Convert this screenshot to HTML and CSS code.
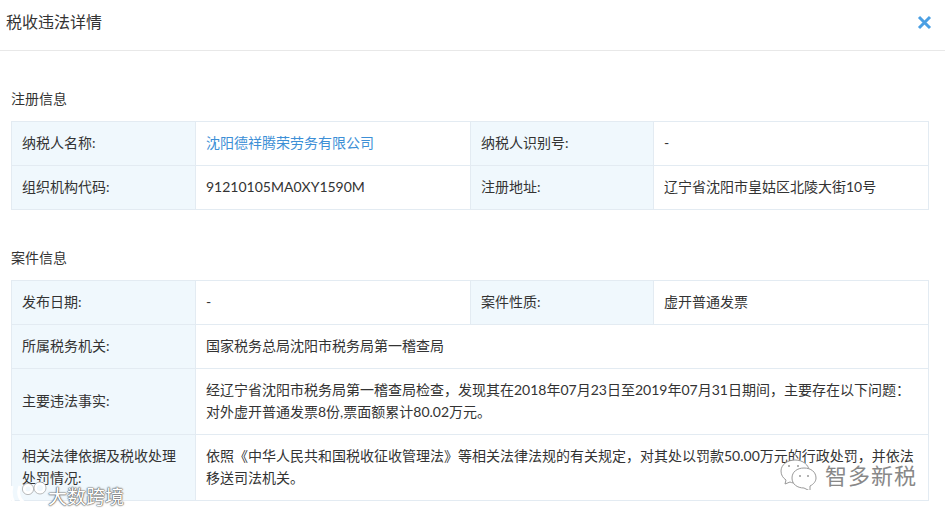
FILE: index.html
```html
<!DOCTYPE html>
<html lang="zh-CN">
<head>
<meta charset="utf-8">
<title>税收违法详情</title>
<link rel="stylesheet" href="styles.css">
</head>
<body>
<div class="dialog">
  <header class="head">
    <h1 class="title">税收违法详情</h1>
    <svg class="close" width="15" height="15" viewBox="0 0 15 15" aria-label="关闭"><path d="M2 2 L13 13 M13 2 L2 13" stroke="#4a9fe3" stroke-width="3" fill="none"/></svg>
  </header>
  <section class="section first">
    <h2 class="sub">注册信息</h2>
    <table class="info">
      <colgroup><col class="c1"><col class="c2"><col class="c3"><col class="c4"></colgroup>
      <tr class="r44"><th>纳税人名称:</th><td><a class="link">沈阳德祥腾荣劳务有限公司</a></td><th>纳税人识别号:</th><td>-</td></tr>
      <tr class="r44"><th>组织机构代码:</th><td>91210105MA0XY1590M</td><th>注册地址:</th><td>辽宁省沈阳市皇姑区北陵大街10号</td></tr>
    </table>
  </section>
  <section class="section second">
    <h2 class="sub">案件信息</h2>
    <table class="info">
      <colgroup><col class="c1"><col class="c2"><col class="c3"><col class="c4"></colgroup>
      <tr class="r44"><th>发布日期:</th><td>-</td><th>案件性质:</th><td>虚开普通发票</td></tr>
      <tr class="r44"><th>所属税务机关:</th><td colspan="3">国家税务总局沈阳市税务局第一稽查局</td></tr>
      <tr class="r66"><th>主要违法事实:</th><td colspan="3">经辽宁省沈阳市税务局第一稽查局检查，发现其在2018年07月23日至2019年07月31日期间，主要存在以下问题：<br>对外虚开普通发票8份,票面额累计80.02万元。</td></tr>
      <tr class="r66"><th>相关法律依据及税收处理处罚情况:</th><td colspan="3">依照《中华人民共和国税收征收管理法》等相关法律法规的有关规定，对其处以罚款50.00万元的行政处罚，并依法<br>移送司法机关。</td></tr>
    </table>
  </section>
</div>
<div class="mark mark-left">
  <svg width="40" height="28" viewBox="0 0 40 28"><g fill="none" stroke="#fff" stroke-width="3"><path d="M4 5 C2 13 4 21 9 25"/><path d="M12 5 C9 12 11 20 19 23"/><circle cx="20" cy="8" r="4"/><circle cx="32" cy="7" r="4.5"/></g><g fill="none" stroke="#888" stroke-width=".8" opacity=".7"><circle cx="20" cy="8" r="5.6"/><circle cx="32" cy="7" r="6"/></g></svg>
  <span class="mark-text">大数跨境</span>
</div>
<div class="mark mark-right">
  <svg width="38" height="32" viewBox="0 0 38 32"><g fill="#fff" stroke="#999" stroke-width="1"><path d="M15 2 C7 2 1 7 1 13 C1 17 3 20 6 22 L5 26 L10 24 C12 25 14 25 16 25 C24 25 29 19 29 13 C29 7 23 2 15 2 Z"/><path d="M24 10 C17 10 12 14 12 20 C12 26 17 30 24 30 L30 33 L30 28 C34 26 36 23 36 20 C36 14 31 10 24 10 Z"/></g><g fill="#999"><circle cx="20" cy="18" r="1"/><circle cx="28" cy="18" r="1"/><circle cx="9" cy="8" r="1"/><circle cx="18" cy="8" r="1"/></g></svg>
  <span class="mark-text dark">智多新税</span>
</div>
</body>
</html>
```
FILE: styles.css
```css
* { box-sizing: border-box; }
html, body { margin: 0; padding: 0; }
body {
  width: 945px;
  height: 515px;
  overflow: hidden;
  position: relative;
  background: #fff;
  color: #333;
  font-family: "Lato", "Noto Sans CJK SC", "Liberation Sans", sans-serif;
  font-size: 14px;
}
.head {
  height: 51px;
  display: flex;
  align-items: center;
  justify-content: space-between;
  padding: 0 13px 5px 6px;
  border-bottom: 1px solid #e8e8e8;
}
.title { margin: 0 0 1px; font-size: 16px; line-height: 24px; font-weight: 400; color: #333; }
.section { padding: 0 17px 0 11px; }
.first { padding-top: 37px; }
.second { padding-top: 37px; }
.sub {
  margin: 0 0 12px;
  height: 21px;
  line-height: 21px;
  font-size: 14px;
  font-weight: 400;
  color: #333;
}
.info {
  width: 917px;
  table-layout: fixed;
  border-collapse: collapse;
  border: 1px solid #e3ebf2;
}
.c1 { width: 184px; }
.c2 { width: 275px; }
.c3 { width: 183px; }
.c4 { width: 275px; }
.info th, .info td {
  border: 1px solid #e3ebf2;
  padding: 0 10px 1px;
  font-weight: 400;
  text-align: left;
  line-height: 22px;
  vertical-align: middle;
  color: #333;
}
.info th { background: #f0f8fd; }
.r44 { height: 44px; }
.r66 { height: 66px; }
.link { color: #3d8fd6; }
.mark {
  position: absolute;
  display: flex;
  align-items: center;
}
.mark-left { left: 8px; top: 481px; gap: 0; }
.mark-right { left: 780px; top: 458px; gap: 7px; }
.mark-text {
  font-size: 19px;
  color: #fff;
  text-shadow: 0 0 2px #555, 0 0 1px #555, 0 0 1px #555;
}
.mark-text.dark {
  font-size: 22px;
  letter-spacing: 1px;
  color: #888;
  text-shadow: 0 0 2px #fff;
}
```
